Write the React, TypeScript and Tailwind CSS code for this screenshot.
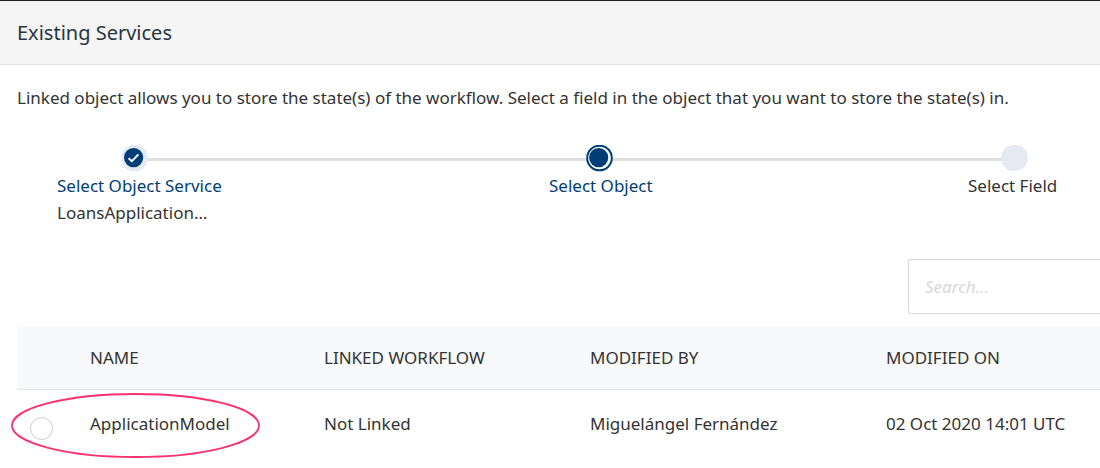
import React from "react";

type StepState = "done" | "current" | "pending";

function StepMarker({ state }: { state: StepState }) {
  return (
    <svg viewBox="0 0 27 27" className="relative h-[27px] w-[27px]" aria-hidden="true">
      {state === "current" ? (
        <>
          <circle cx="13.5" cy="13" r="12.3" fill="#fff" stroke="#003e75" strokeWidth="2" />
          <circle cx="12.7" cy="12.6" r="9.6" fill="#003e75" />
        </>
      ) : (
        <circle cx="13.5" cy="13" r="13.3" fill="#e6e9f1" />
      )}
      {state === "done" && (
        <>
          <circle cx="12.6" cy="12.6" r="9.6" fill="#003e75" />
          <path d="M7.6 13.2 L10.9 16.2 L17.4 9.4" fill="none" stroke="#fff" strokeWidth="2" />
        </>
      )}
    </svg>
  );
}

const stepColumn: Record<StepState, string> = {
  done: "col-start-1",
  current: "col-start-3",
  pending: "col-start-5",
};

function Step({ state, label, detail }: { state: StepState; label: string; detail?: string }) {
  return (
    <li className={`flex flex-col items-center ${stepColumn[state]}`}>
      <StepMarker state={state} />
      <div className="w-full whitespace-nowrap leading-[27px]">
        <div className={state === "pending" ? "" : "text-[#003e75]"}>{label}</div>
        {detail && <div>{detail}</div>}
      </div>
    </li>
  );
}

export default function App() {
  return (
    <main className="overflow-x-hidden border-t border-[#231f26] bg-white font-['Noto_Sans','Open_Sans',sans-serif] text-[17px] text-[#333]">
      <header className="border-b border-[#e0e0e0] bg-[#f5f5f5] px-[17px] py-4">
        <h1 className="text-[20px] leading-[31px] text-[#273540]">Existing Services</h1>
      </header>

      <section className="pb-2 pl-[17px] pt-5">
        <p className="whitespace-nowrap leading-[26px]">
          Linked object allows you to store the state(s) of the workflow. Select a field in the object that you want to store the state(s) in.
        </p>

        <div className="relative mt-[34px] pl-10 pr-[39px]">
          <div className="absolute left-[120px] right-[90px] top-[13px] h-[3px] bg-[#e0e0e0]" />
          <ol className="grid grid-cols-[154px_338fr_100px_319fr_93px]">
            <Step state="done" label="Select Object Service" detail="LoansApplication…" />
            <Step state="current" label="Select Object" />
            <Step state="pending" label="Select Field" />
          </ol>
        </div>

        <div className="mt-[33px] flex justify-end">
          <input
            type="search"
            aria-label="Search"
            placeholder="Search..."
            className="h-[55px] w-48 rounded-l-[3px] border border-r-0 border-[#d8d8d8] px-4 outline-none placeholder:italic placeholder:text-[#d8d8d8]"
          />
        </div>

        <table className="mt-[13px] w-full table-fixed whitespace-nowrap text-left">
          <colgroup>
            <col className="w-[73px]" />
            <col className="w-[234px]" />
            <col className="w-[266px]" />
            <col className="w-[296px]" />
            <col />
          </colgroup>
          <thead>
            <tr className="h-[62px] border-b border-[#e3e5e8] bg-[#f8f9fb]">
              <td />
              <th scope="col" className="font-normal">NAME</th>
              <th scope="col" className="font-normal">LINKED WORKFLOW</th>
              <th scope="col" className="font-normal">MODIFIED BY</th>
              <th scope="col" className="font-normal">MODIFIED ON</th>
            </tr>
          </thead>
          <tbody>
            <tr className="h-[68px]">
              <td className="relative pl-[13px] pt-[10px]">
                <input
                  id="application-model"
                  type="radio"
                  name="object"
                  className="block h-[23px] w-[23px] appearance-none rounded-full border border-[#ccc] bg-white checked:bg-[#003e75]"
                />
                <svg
                  viewBox="0 0 250 66"
                  className="pointer-events-none absolute -left-[6px] top-[3px] h-[66px] w-[250px] max-w-none"
                  aria-hidden="true"
                >
                  <ellipse cx="124.5" cy="32.5" rx="123.5" ry="31.5" fill="none" stroke="#f7326f" strokeWidth="1.8" />
                </svg>
              </td>
              <td>
                <label htmlFor="application-model">ApplicationModel</label>
              </td>
              <td>Not Linked</td>
              <td>Miguelángel Fernández</td>
              <td>02 Oct 2020 14:01 UTC</td>
            </tr>
          </tbody>
        </table>
      </section>
    </main>
  );
}
